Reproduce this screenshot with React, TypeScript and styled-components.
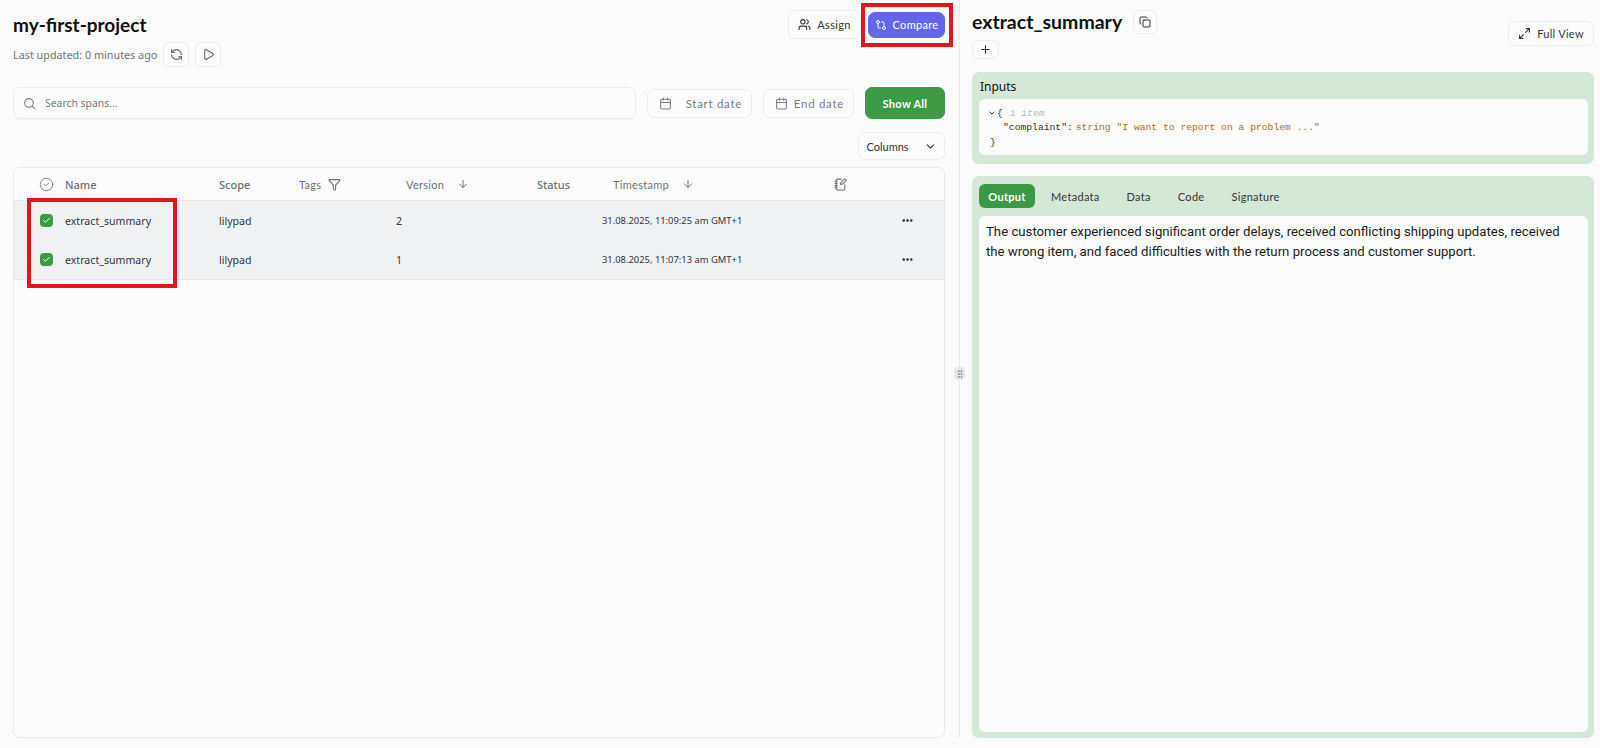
import React from 'react';
import styled, { createGlobalStyle } from 'styled-components';
import {
  ArrowDown,
  Calendar,
  Check,
  ChevronDown,
  CircleCheck,
  Copy,
  Ellipsis,
  Funnel,
  GitCompare,
  GripVertical,
  Maximize2,
  NotebookPen,
  Play,
  Plus,
  RefreshCcw,
  Search,
  Users,
} from 'lucide-react';

const hand = '"Lato", "Noto Sans", sans-serif';
const body = '"Noto Sans", "Open Sans", sans-serif';
const mono = '"Liberation Mono", "DejaVu Sans Mono", monospace';

const GlobalStyle = createGlobalStyle`
  html, body {
    margin: 0;
    height: 100%;
    background: #fbfbfb;
    color: #111;
    font-family: ${body};
  }
  * { box-sizing: border-box; }
`;

const Page = styled.div`
  display: flex;
  height: 748px;
  overflow: hidden;
`;

const LeftPane = styled.main`
  display: flex;
  flex-direction: column;
  width: 946px;
  padding: 10px 1px 10px 13px;
`;

const HeaderRow = styled.div`
  display: flex;
  justify-content: space-between;
  align-items: flex-start;
  height: 77px;
`;

const Title = styled.h1`
  margin: 3px 0 0;
  font: 700 19px/24px ${hand};
`;

const MetaRow = styled.div`
  display: flex;
  align-items: center;
  gap: 6px;
  margin-top: 5px;
  font-size: 10.8px;
  color: #71767d;
`;

const Actions = styled.div`
  display: flex;
  align-items: center;
  gap: 7px;
`;

const IconButton = styled.button<{ $w?: number; $h?: number }>`
  display: inline-flex;
  align-items: center;
  justify-content: center;
  width: ${(p) => p.$w ?? 26}px;
  height: ${(p) => p.$h ?? 25}px;
  padding: 0;
  background: #fcfcfc;
  border: 1px solid #ebecee;
  border-radius: 6px;
  color: #5f646b;
`;

const Button = styled.button<{ $w: number; $h: number; $bg?: string; $fg?: string; $weight?: number; $gap?: number }>`
  position: relative;
  display: inline-flex;
  align-items: center;
  justify-content: center;
  gap: ${(p) => p.$gap ?? 6}px;
  flex: none;
  width: ${(p) => p.$w}px;
  height: ${(p) => p.$h}px;
  padding: 0;
  background: ${(p) => p.$bg ?? '#fcfcfc'};
  border: 1px solid ${(p) => p.$bg ?? '#ebecee'};
  border-radius: 7px;
  color: ${(p) => p.$fg ?? '#33373c'};
  font: ${(p) => p.$weight ?? 400} 11px ${hand};
  letter-spacing: 0.3px;
`;

const ColumnsButton = styled(Button)`
  letter-spacing: 0;
`;

const Highlight = styled.span`
  position: absolute;
  border: 4px solid #e5141d;
  pointer-events: none;
`;

const CompareHighlight = styled(Highlight)`
  top: -10px;
  left: -8px;
  right: -9px;
  bottom: -10px;
`;

const RowsHighlight = styled(Highlight)`
  top: -3px;
  left: 13px;
  width: 150px;
  height: 90px;
  z-index: 1;
`;

const FilterRow = styled.div`
  display: flex;
  align-items: center;
  gap: 11px;
  height: 32px;
`;

const SearchBox = styled.div`
  display: flex;
  flex: 1;
  align-items: center;
  gap: 9px;
  height: 32px;
  padding: 0 9px;
  background: #fcfcfc;
  border: 1px solid #ebecee;
  border-radius: 7px;
  box-shadow: 0 1px 1px rgba(0, 0, 0, 0.03);
  color: #777c83;
  font-size: 10.4px;
`;

const DateButton = styled.button<{ $w: number }>`
  display: flex;
  flex: none;
  align-items: center;
  justify-content: space-between;
  width: ${(p) => p.$w}px;
  height: 29px;
  padding: 0 9px 0 11px;
  background: #fcfcfc;
  border: 1px solid #ebecee;
  border-radius: 7px;
  color: #7b8087;
  font: 400 11.5px ${hand};
  letter-spacing: 0.7px;
`;

const ColumnsRow = styled.div`
  display: flex;
  justify-content: flex-end;
  margin: 13px 0 7px;
`;

const Table = styled.section`
  flex: 1;
  background: #fcfcfc;
  border: 1px solid #e9eaec;
  border-radius: 7px;
`;

const gridColumns = '51px 154px 80px 97px 141px 65px 232px 67px 1fr';

const HeadRow = styled.div`
  display: grid;
  grid-template-columns: ${gridColumns};
  align-items: center;
  height: 33px;
  border-bottom: 1px solid #e3e5e8;
  color: #6d727a;
  font-size: 11px;
`;

const HeadCell = styled.div<{ $indent?: number; $hand?: boolean }>`
  display: flex;
  align-items: center;
  padding-left: ${(p) => p.$indent ?? 0}px;
  font-family: ${(p) => (p.$hand ? hand : body)};
  font-weight: ${(p) => (p.$hand ? 400 : 500)};
  letter-spacing: ${(p) => (p.$hand ? '0.3px' : '0')};
`;

const Rows = styled.div`
  position: relative;
  border-bottom: 1px solid #e3e5e8;
`;

const Row = styled.div`
  display: grid;
  grid-template-columns: ${gridColumns};
  align-items: center;
  height: 39px;
  background: #f0f1f3;
  color: #33373c;
`;

const Cell = styled.div<{ $small?: boolean }>`
  display: flex;
  font-size: ${(p) => (p.$small ? 9.4 : 10.6)}px;
  white-space: nowrap;
`;

const CheckBox = styled.span`
  display: flex;
  align-items: center;
  justify-content: center;
  width: 13px;
  height: 13px;
  margin-left: 26px;
  background: #3b9a44;
  border-radius: 4px;
  color: #fff;
`;

const Splitter = styled.div`
  position: relative;
  flex: none;
  width: 26px;
  &::before {
    content: '';
    position: absolute;
    top: 0;
    bottom: 10px;
    left: 13px;
    width: 1px;
    background: #e9eaec;
  }
`;

const Handle = styled.span`
  position: absolute;
  top: 367px;
  left: 8px;
  display: flex;
  align-items: center;
  justify-content: center;
  width: 11px;
  height: 13px;
  background: #e6e7e9;
  border-radius: 4px;
  color: #73777d;
`;

const RightPane = styled.aside`
  display: flex;
  flex-direction: column;
  width: 622px;
  padding-top: 10px;
  padding-bottom: 10px;
`;

const DetailHeader = styled.div`
  display: flex;
  justify-content: space-between;
  height: 62px;
`;

const NameRow = styled.div`
  display: flex;
  align-items: center;
  gap: 11px;
`;

const SpanName = styled.h2`
  margin: 0;
  font: 700 19.5px/24px ${hand};
`;

const AddButton = styled(IconButton)`
  margin-top: 6px;
  color: #222;
`;

const CopyButton = styled(IconButton)`
  color: #333;
`;

const FullViewButton = styled(Button)`
  margin-top: 11px;
`;

const GreenCard = styled.section<{ $grow?: boolean }>`
  display: flex;
  flex-direction: column;
  flex: ${(p) => (p.$grow ? 1 : 'none')};
  padding: 0 6px 6px 7px;
  background: #d5e7d6;
  border-radius: 7px;
`;

const InputsCard = styled(GreenCard)`
  margin-bottom: 12px;
  height: 92px;
  padding-bottom: 9px;
`;

const CardLabel = styled.div`
  height: 27px;
  padding: 7px 0 0 1px;
  font-size: 12px;
  line-height: 16px;
`;

const JsonBox = styled.div`
  flex: 1;
  padding: 7px 9px 0;
  background: #fcfcfc;
  border-radius: 6px;
  font: 400 9.7px/15px ${mono};
  color: #333;
`;

const JsonLine = styled.div<{ $indent?: number }>`
  display: flex;
  align-items: center;
  gap: 1px;
  height: 14.5px;
  white-space: pre;
  margin-left: ${(p) => p.$indent ?? 0}px;
`;

const Muted = styled.span`
  color: #b5b8bb;
  font-style: italic;
`;

const Brown = styled.span`
  color: #b06a2c;
  margin-left: 2px;
`;

const Tabs = styled.nav`
  display: flex;
  align-items: flex-start;
  height: 40px;
  padding-top: 8px;
`;

const Tab = styled.span<{ $active?: boolean }>`
  display: flex;
  align-items: center;
  justify-content: center;
  width: ${(p) => (p.$active ? '56px' : 'auto')};
  height: 24px;
  padding: 0 10px;
  margin-right: ${(p) => (p.$active ? 6 : 7)}px;
  background: ${(p) => (p.$active ? '#3b9a44' : 'transparent')};
  border-radius: 6px;
  color: ${(p) => (p.$active ? '#fff' : '#33373c')};
  font: ${(p) => (p.$active ? 700 : 400)} 11px ${hand};
  letter-spacing: 0.3px;
`;

const OutputBox = styled.div`
  flex: 1;
  padding: 6px 14px 6px 7px;
  background: #fcfcfc;
  border-radius: 6px;
  font-family: Roboto, "Noto Sans", sans-serif;
  font-size: 13.2px;
  line-height: 20px;
  color: #1c1c1c;
`;

const rows = [
  { version: '2', time: '31.08.2025, 11:09:25 am GMT+1' },
  { version: '1', time: '31.08.2025, 11:07:13 am GMT+1' },
];

export default function App() {
  return (
    <Page>
      <GlobalStyle />
      <LeftPane>
        <HeaderRow>
          <div>
            <Title>my-first-project</Title>
            <MetaRow>
              Last updated: 0 minutes ago
              <IconButton>
                <RefreshCcw size={13} />
              </IconButton>
              <IconButton>
                <Play size={13} />
              </IconButton>
            </MetaRow>
          </div>
          <Actions>
            <Button $w={73} $h={29}>
              <Users size={13} />
              Assign
            </Button>
            <Button $w={77} $h={26} $bg="#6366ea" $fg="#fff">
              <GitCompare size={12} />
              Compare
              <CompareHighlight />
            </Button>
          </Actions>
        </HeaderRow>

        <FilterRow>
          <SearchBox>
            <Search size={13} />
            Search spans...
          </SearchBox>
          <DateButton $w={105}>
            <Calendar size={13} />
            Start date
          </DateButton>
          <DateButton $w={91}>
            <Calendar size={13} />
            End date
          </DateButton>
          <Button $w={80} $h={32} $bg="#3b9a44" $fg="#fff" $weight={700}>
            Show All
          </Button>
        </FilterRow>

        <ColumnsRow>
          <ColumnsButton $w={87} $h={28} $gap={15}>
            Columns
            <ChevronDown size={13} />
          </ColumnsButton>
        </ColumnsRow>

        <Table>
          <HeadRow>
            <HeadCell $indent={25}>
              <CircleCheck size={15} strokeWidth={1.4} />
            </HeadCell>
            <HeadCell>Name</HeadCell>
            <HeadCell>Scope</HeadCell>
            <HeadCell $hand>
              Tags&nbsp;
              <Funnel size={13} style={{ marginLeft: 3 }} />
            </HeadCell>
            <HeadCell $hand $indent={10}>
              Version
              <ArrowDown size={12} style={{ marginLeft: 13 }} />
            </HeadCell>
            <HeadCell>Status</HeadCell>
            <HeadCell $hand $indent={11}>
              Timestamp
              <ArrowDown size={12} style={{ marginLeft: 13 }} />
            </HeadCell>
            <HeadCell>
              <NotebookPen size={13} />
            </HeadCell>
            <HeadCell />
          </HeadRow>
          <Rows>
            <RowsHighlight />
            {rows.map((r) => (
              <Row key={r.version}>
                <Cell>
                  <CheckBox>
                    <Check size={9} strokeWidth={2.5} />
                  </CheckBox>
                </Cell>
                <Cell>extract_summary</Cell>
                <Cell>lilypad</Cell>
                <Cell />
                <Cell>{r.version}</Cell>
                <Cell />
                <Cell $small>{r.time}</Cell>
                <Cell />
                <Cell>
                  <Ellipsis size={13} strokeWidth={2.6} color="#222" />
                </Cell>
              </Row>
            ))}
          </Rows>
        </Table>
      </LeftPane>

      <Splitter>
        <Handle>
          <GripVertical size={10} />
        </Handle>
      </Splitter>

      <RightPane>
        <DetailHeader>
          <div>
            <NameRow>
              <SpanName>extract_summary</SpanName>
              <CopyButton $w={24} $h={24}>
                <Copy size={12} />
              </CopyButton>
            </NameRow>
            <AddButton $w={27} $h={19}>
              <Plus size={13} />
            </AddButton>
          </div>
          <FullViewButton $w={86} $h={25}>
            <Maximize2 size={13} />
            Full View
          </FullViewButton>
        </DetailHeader>

        <InputsCard>
          <CardLabel>Inputs</CardLabel>
          <JsonBox>
            <JsonLine>
              <ChevronDown size={8} strokeWidth={3} />
              {'{ '}
              <Muted>1 item</Muted>
            </JsonLine>
            <JsonLine $indent={15}>
              "complaint":<Brown>string "I want to report on a problem ..."</Brown>
            </JsonLine>
            <JsonLine $indent={2}>{'}'}</JsonLine>
          </JsonBox>
        </InputsCard>

        <GreenCard $grow>
          <Tabs>
            <Tab $active>Output</Tab>
            <Tab>Metadata</Tab>
            <Tab>Data</Tab>
            <Tab>Code</Tab>
            <Tab>Signature</Tab>
          </Tabs>
          <OutputBox>
            The customer experienced significant order delays, received conflicting shipping updates, received the
            wrong item, and faced difficulties with the return process and customer support.
          </OutputBox>
        </GreenCard>
      </RightPane>
    </Page>
  );
}
